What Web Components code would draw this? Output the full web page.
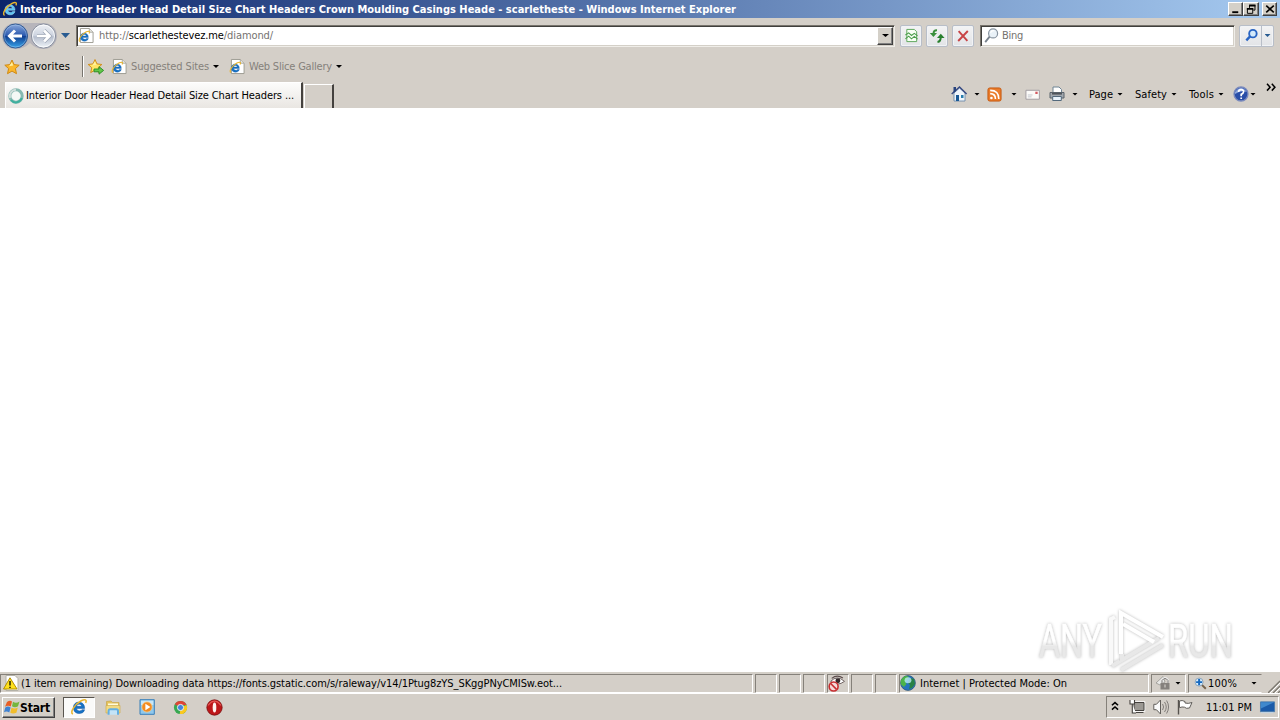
<!DOCTYPE html>
<html lang="en">
<head>
<meta charset="utf-8">
<title>Windows Internet Explorer</title>
<style>
  html, body { margin: 0; height: 100%; overflow: hidden; }
  body {
    font: 11px/14px "DejaVu Sans Condensed", "DejaVu Sans", sans-serif;
    font-stretch: condensed;
    color: #000;
    background: #d4cfc8;
  }
</style>
</head>
<body>
<desktop-screen></desktop-screen>
<script>
(function() {
  function define(name, html, setup) {
    const template = document.createElement("template");
    template.innerHTML = html;
    window.customElements.define(name, class extends HTMLElement {
      constructor() {
        super();
        this.attachShadow({ mode: "open" });
        this.shadowRoot.appendChild(template.content.cloneNode(true));
      }
      connectedCallback() {
        if (this.hasAttribute("x")) this.style.marginLeft = this.getAttribute("x") + "px";
        if (this.hasAttribute("w")) this.style.width = this.getAttribute("w") + "px";
        if (setup) setup(this, this.shadowRoot);
      }
    });
  }

  const eGlyph = `
    <path d="M13 9.3H5.8C6 11.6 9.8 12.2 10.6 10.4H13C12 15.3 3 15.2 3 8.6 3 1.8 13.3 2 13 9.3ZM5.9 7.4H10.3C10 4.9 6.3 4.9 5.9 7.4Z" fill="#1672c4" stroke="#0c4e9c" stroke-width=".4"/>
    <path d="M2.6 14.3C-.6 13 4.3 5.4 10 2.4 13.3.7 15.3 1.4 13.9 4.4" fill="none" stroke="#e9b52e" stroke-width="1.4"/>`;
  const star = (c) => `<path d="M8 1 10.1 5.6 15.2 6.2 11.4 9.6 12.5 14.7 8 12.1 3.5 14.7 4.6 9.6.8 6.2 5.9 5.6Z" fill="${c}" stroke="#d08a14" stroke-width="1"/><path d="M8 3 9.2 6.6 5 7.2Z" fill="#fff2a0"/>`;

  // every icon is drawn on a 16 x 16 grid
  const icons = {
    ie: eGlyph,
    ielight: eGlyph.replace("#1672c4", "#5cc5f5").replace("#0c4e9c", "#c3efff"),
    page: `<path d="M1.5.5H11L15 4.5V15.5H1.5Z" fill="#fff" stroke="#9b9a90"/><path d="M11 .5V4.5H15" fill="#e6e6df" stroke="#9b9a90" stroke-width=".8"/><g transform="translate(-1.2 2.2) scale(.86)">${eGlyph}</g>`,
    star: star("#fbb72c"),
    addstar: `<g transform="translate(-.6 -.4) scale(.95)">${star("#ffe566")}</g><path d="M6 10H11V7.6L15.6 11.4 11 15.2V12.8H6Z" fill="#63c74a" stroke="#268b25" stroke-width=".9"/>`,
    spinner: `<circle cx="8" cy="8" r="6.2" fill="#f5f8f6" stroke="#86b9b1" stroke-width="3"/><path d="M8 1.8A6.2 6.2 0 0 0 2 10" fill="none" stroke="#d1dddb" stroke-width="2"/><path d="M3 12A6.2 6.2 0 0 0 13.8 10" fill="none" stroke="#3fb09f" stroke-width="2"/>`,
    broken: `<path d="M3 1.5H11L13.5 4V14.5H3Z" fill="#f7fff4" stroke="#57a456"/><path d="M1.5 7.5 5 5.2 8 8 11 5.7 14.5 8.5M1.5 11.5 5 8.7 8 11.5 11 9 14.5 11.8" fill="none" stroke="#4b9d4b" stroke-width="1.1"/>`,
    refresh: `<path d="M8 2.2Q4.5 2 4.5 6" fill="none" stroke="#398f3c" stroke-width="2"/><path d="M.8 5H8L4.4 9Z" fill="#398f3c"/><path d="M8.5 14Q11.9 13.5 11.7 9" fill="none" stroke="#287f2e" stroke-width="2"/><path d="M8 10H15.6L11.8 5.8Z" fill="#287f2e"/>`,
    stop: `<path d="M3 2.5 13 13.5M13.5 2.3 2.5 13.7" stroke="#c84446" stroke-width="2.2"/>`,
    lens: `<circle cx="9.7" cy="5.8" r="4.8" fill="#eaf2f8" stroke="#8995a1" stroke-width="1.3"/><path d="M6 9.3 1.3 15" stroke="#77818c" stroke-width="2"/><path d="M7 5Q8 2.5 11 3" fill="none" stroke="#fff" stroke-width="1.3"/>`,
    bluelens: `<circle cx="9.5" cy="6" r="4" fill="#d4eafb" stroke="#2864c3" stroke-width="2"/><path d="M6.5 9 2.5 13.2" stroke="#2864c3" stroke-width="2.6"/>`,
    home: `<path d="M3 7V15H14V7L8.5 2Z" fill="#eff5fb" stroke="#6080a4" stroke-width=".8"/><path d="M.7 8 8.5 1 15.6 8" fill="none" stroke="#384b83" stroke-width="1.5"/><path d="M2.5 1H5V5L2.5 7Z" fill="#28447e"/><path d="M5 9H8V15H5Z" fill="#195894"/><path d="M10 9H12.5V12H10Z" fill="#287dad"/>`,
    rss: `<rect x="1" y="1" width="14" height="14" rx="2" fill="#ea7c2c" stroke="#c4550c"/><circle cx="4.7" cy="11.7" r="1.4" fill="#fff"/><path d="M3.4 7.1Q9 7.1 9 12.8M3.4 3.6Q12.7 3.6 12.6 12.8" fill="none" stroke="#fff" stroke-width="1.7"/>`,
    mail: `<path d="M1 3.5H15.3V13H1Z" fill="#fbfaf8" stroke="#a09ba0"/><path d="M3 8.5H8M3 10.5H7" stroke="#bfc3cc"/><path d="M11 5H13.5V7.5H11Z" fill="#d35961"/>`,
    printer: `<path d="M4 7V1H10L12.5 3.5V7" fill="#fff" stroke="#6f8494"/><path d="M1 6.5H15V12H1Z" fill="#a1a7ae" stroke="#59626a"/><path d="M3 7.8H13" stroke="#4b5056" stroke-width="1.5"/><path d="M3.7 10.5H12.3V14.5H3.7Z" fill="#e8f2fb" stroke="#53697c"/>`,
    help: `<circle cx="8" cy="8" r="7" fill="#294ea8" stroke="#7a8abd" stroke-width="1.3"/><path d="M2 6Q8-2 14 6 8 4 2 8Z" fill="#8ba5db"/><path d="M5.5 6Q5.7 3.7 8.1 3.7C12 3.7 10.9 7.3 8.2 8.4V10.2M8.2 11.5V13" fill="none" stroke="#fff" stroke-width="1.7"/>`,
    warning: `<path d="M3 .5H12L15 3.5V15.5H3Z" fill="#fff" stroke="#b4b2a8"/><path d="M7 2.8 14 14H.5Z" fill="#ffe11d" stroke="#b28e00" stroke-linejoin="round"/><path d="M7 6V10.5M7 11.7V13" stroke="#242100" stroke-width="1.5"/>`,
    blocked: `<path d="M2.5 6Q8.5-.5 15.5 6 9 11 2.5 6Z" fill="#fff" stroke="#6b5d5c" stroke-width=".9"/><circle cx="9.3" cy="5.4" r="2.3" fill="#33292b"/><path d="M3.5 3.2Q8.5-1 14 2.8" fill="none" stroke="#5b4c4c" stroke-width="1.1"/><circle cx="5.3" cy="10.8" r="4.2" fill="#f4dada" stroke="#c72e31" stroke-width="1.5"/><path d="M2.5 8 8 13.5" stroke="#c72e31" stroke-width="1.5"/>`,
    globe: `<circle cx="8" cy="8" r="7.4" fill="#2574bc" stroke="#2d506d" stroke-width=".7"/><path d="M3 2.5Q6-.2 9 2L7 5 5.5 7 6.5 9 4 12 1 9.5Q-.3 5 3 2.5Z" fill="#4bb349"/><path d="M10 3 14 4 15 9 12 13 9 14 10 10 8 8Z" fill="#278145"/><ellipse cx="8" cy="5.3" rx="3.4" ry="3" fill="#c1f0ff" opacity=".75"/>`,
    lock: `<path d="M1 8 8 1.5 10 7 5 10Z" fill="#e8e8e6" stroke="#96948f" stroke-width=".8"/><path d="M7 8V5Q10 1 13 5V8" fill="none" stroke="#eee" stroke-width="2"/><path d="M7 8V5.5Q10 1.5 13 5.5V8" fill="none" stroke="#77736f" stroke-width="1"/><path d="M5.5 8H14.5V14.5H5.5Z" fill="#85817d"/><path d="M10 9.5V12.5" stroke="#dedbd6"/>`,
    zoom: `<circle cx="6.3" cy="6.3" r="4.9" fill="#d8edfb" stroke="#7c98b2"/><path d="M6.3 2.6V10M2.6 6.3H10" stroke="#1769c0" stroke-width="2.4"/><path d="M10 10 14.5 14.5" stroke="#75624c" stroke-width="2.4"/>`,
    windows: `<path d="M3 3Q6 .7 8 2.5L6.8 7.5Q4 5.8 1 7.8Z" fill="#e85e25"/><path d="M9 2.8Q12 5 15.5 2.6L14 7.3Q11 9.2 8 7.3Z" fill="#75b63d"/><path d="M1.3 8.5Q4 6.6 6.6 8.5L5.3 13.5Q2.5 11.7 0 13.3Z" fill="#3f82d2"/><path d="M7.5 8.8Q11 10.5 13.8 8.5L12.4 13.8Q9 15.4 6.3 13.8Z" fill="#f1bd2c"/>`,
    folder: `<path d="M1.5 12V2.5L6 2 7.5 3.5H14V12Z" fill="#e5c35c" stroke="#c9a548" stroke-width=".7"/><path d="M3 4.5H13V8H3Z" fill="#fffbdc"/><path d="M1 6.5H15V14H1Z" fill="#f2da82" stroke="#d0ad4e" stroke-width=".7"/><path d="M3.6 15.8V11.8Q3.6 10.3 5 10.3H11.5Q13 10.3 13 11.8V15.8" fill="#c4e3f6" stroke="#64aee0" stroke-width="2"/>`,
    media: `<path d="M1 .7H15.3V15.3H1Z" fill="#8fc8ed" stroke="#397fb9"/><path d="M2 1.7H14.3V6H2Z" fill="#c8e6f7"/><circle cx="8" cy="8" r="5.1" fill="#f28b20" stroke="#ffca7b" stroke-width=".7"/><path d="M6.4 4.7 11.4 8 6.4 11.3Z" fill="#fff"/>`,
    chrome: `<circle cx="8" cy="8" r="7" fill="#38a852"/><path d="M8 8 1.9 4.6A7 7 0 0 1 14.4 5.2H8Z" fill="#df4436"/><path d="M8 8 14.4 5.2A7 7 0 0 1 7.2 15Z" fill="#fbc91e"/><circle cx="8" cy="8" r="3.3" fill="#4285de" stroke="#f3f4f0" stroke-width="1"/>`,
    opera: `<circle cx="8" cy="8" r="7.2" fill="#bd1719" stroke="#7c0c0d" stroke-width=".8"/><path d="M2 6Q8-2 14 6" fill="none" stroke="#e75552" stroke-width="1"/><ellipse cx="8" cy="8" rx="1.7" ry="4.8" fill="#fff3ee"/>`,
    network: `<path d="M5 3.5H15V11.5H5Z" fill="#9c9994" stroke="#fff" stroke-width="2.5"/><path d="M5 3.5H15V11.5H5Z" fill="#9c9994" stroke="#45423f"/><path d="M7 13.5H14.5" stroke="#45423f"/><path d="M1 1V5H5.5V1M3.3 5V14H7" fill="#fff" stroke="#45423f" stroke-width="1.1"/>`,
    volume: `<path d="M.8 5.3H3.4L7.5 1V15L3.4 10.7H.8Z" fill="#fafafa" stroke="#625f5b"/><path d="M9.6 5Q11.5 8 9.6 11M11.5 3Q15 8 11.5 13M13.6 1.5Q17.5 8 13.6 14.5" fill="none" stroke="#77736f" stroke-width=".9"/>`,
    flag: `<path d="M1.5 1V15.5" stroke="#56524e" stroke-width="1.4"/><path d="M2.5 2Q5 .8 8 2.5V4Q11 5 15 3.5L12.5 9Q9 10 7.5 8.2 5 7.5 2.5 8.7Z" fill="#fff" stroke="#625f5b"/>`,
    monitor: `<path d="M.5 2H15.5V12.5H.5Z" fill="#1b5ba9" stroke="#4d7dac"/><path d="M1 2.5H15L1 9Z" fill="#4089cd"/><path d="M1 13.5H14.5" stroke="#c3d6e8"/>`,
    min: `<path d="M3 11H11V13.5H3Z"/>`,
    restore: `<path d="M5.5 2H14V4.5H5.5ZM2.5 6.5H11V9H2.5Z"/><path d="M6 3V6.5M13.3 3V9.5H11M3.2 7V13.8H10.3V7" fill="none" stroke="#000" stroke-width="1.3"/>`,
    close: `<path d="M3 3.5 13 12.5M13 3.5 3 12.5" stroke="#000" stroke-width="2.2"/>`,
    chevrons: `<path d="M4.5 6 8 3 11.5 6M4.5 11 8 8 11.5 11" fill="none" stroke="#000" stroke-width="1.8"/>`,
    more: `<path d="M0 4 4.5 9 0 14M7 4 11.5 9 7 14" fill="none" stroke="#000" stroke-width="2.2"/>`
  };

  define("ui-icon", `
    <style>
      :host { display: block; flex: none; width: 16px; }
      svg { display: block; width: 100%; overflow: visible; }
    </style>
    <svg viewBox="0 0 16 16"></svg>`, (el, root) => {
    root.querySelector("svg").innerHTML = icons[el.getAttribute("name")];
  });

  // label that spreads its letters over a set width
  define("ui-label", `
    <style>
      :host { display: block; flex: none; padding-top: 1px; }
      span { display: block; width: max-content; white-space: nowrap; }
    </style>
    <span><slot></slot></span>`, (el, root) => {
    const span = root.querySelector("span");
    const length = el.textContent.length;
    const width = span.getBoundingClientRect().width;
    if (width) span.style.letterSpacing = (el.getAttribute("w") - width) / length + "px";
  });

  define("ui-arrow", `
    <style>
      :host { display: block; flex: none; width: 6px; margin-right: -1px; }
      i { display: block; height: 3px; background: currentColor; clip-path: polygon(0 0, 100% 0, 50% 100%); }
      :host(.down) i { height: 5px; }
    </style>
    <i></i>`);

  define("raised-button", `
    <style>
      :host {
        display: flex; flex: none; align-items: center; justify-content: center;
        box-sizing: border-box; height: 14px; background: #d4d0c8;
        border: 1px solid; border-color: #fff #404040 #404040 #fff;
        box-shadow: inset -1px -1px #808080;
      }
    </style>
    <slot></slot>`);

  define("tool-button", `
    <style>
      :host {
        display: flex; flex: none; align-items: center; justify-content: center;
        box-sizing: border-box; height: 22px; border: 1px solid #b8bec8; border-radius: 2px;
        background: linear-gradient(#f3f3f4, #e2e4e7); box-shadow: inset 0 0 0 1px #f1f3f6;
      }
    </style>
    <slot></slot>`);

  define("sunken-box", `
    <style>
      :host {
        display: flex; flex: none; align-items: center; box-sizing: border-box;
        height: 22px; background: #fff; border: 1px solid;
        border-color: #77736c #f0eee9 #f0eee9 #77736c;
        box-shadow: inset 1px 1px #403f3c, inset -1px -1px #d4d0c8;
      }
    </style>
    <slot></slot>`);

  define("title-bar", `
    <style>
      :host {
        display: flex; align-items: center; height: 18px; color: #fff; font-weight: bold;
        background: linear-gradient(90deg, #0a246a, #a6caf0);
      }
      .buttons { display: flex; margin-left: auto; padding-right: 3px; }
    </style>
    <ui-icon name="ielight" x="2"></ui-icon>
    <ui-label x="2" w="716">Interior Door Header Head Detail Size Chart Headers Crown Moulding Casings Heade - scarletheste - Windows Internet Explorer</ui-label>
    <div class="buttons">
      <raised-button w="15"><ui-icon name="min" w="12"></ui-icon></raised-button>
      <raised-button w="16"><ui-icon name="restore" w="12"></ui-icon></raised-button>
      <raised-button w="15" x="3"><ui-icon name="close" w="12"></ui-icon></raised-button>
    </div>`);

  define("history-buttons", `
    <style>
      :host { display: block; flex: none; width: 58px; height: 30px; }
    </style>
    <svg width="58" height="30" viewBox="0 0 58 30">
      <defs>
        <linearGradient id="b" x2="0" y2="1">
          <stop offset="0" stop-color="#8ba9dc"/><stop offset=".48" stop-color="#2b59ae"/>
          <stop offset=".52" stop-color="#113f91"/><stop offset="1" stop-color="#37a5eb"/>
        </linearGradient>
        <linearGradient id="f" x2="0" y2="1">
          <stop offset="0" stop-color="#eff1f5"/><stop offset=".5" stop-color="#cbd2df"/>
          <stop offset=".53" stop-color="#b5bdcd"/><stop offset="1" stop-color="#f1f6fa"/>
        </linearGradient>
      </defs>
      <path d="M15 2H44A13 13 0 0 1 44 28Q36 28 30 22 24 28 15 28A13 13 0 0 1 15 2Z" fill="#b7b5bb"/>
      <circle cx="15.5" cy="15" r="12" fill="url(#b)" stroke="#315992"/>
      <circle cx="43.5" cy="15" r="12" fill="url(#f)" stroke="#858c9b"/>
      <circle cx="15.5" cy="15" r="11" fill="none" stroke="#b7d8f5" stroke-opacity=".4"/>
      <circle cx="43.5" cy="15" r="11" fill="none" stroke="#fff" stroke-opacity=".8"/>
      <path d="M22 15H10M15 9.5 9.5 15 15 20.5" fill="none" stroke="#fff" stroke-width="3"/>
      <path d="M37 15H49M44 9.5 49.5 15 44 20.5" fill="none" stroke="#9aa3b3" stroke-width="4"/>
      <path d="M37 15H49M44 9.5 49.5 15 44 20.5" fill="none" stroke="#fff" stroke-width="2.7"/>
    </svg>`);

  define("address-row", `
    <style>
      :host { display: flex; align-items: center; height: 35px; color: #74726f; }
      b { font-weight: normal; color: #000; }
      .down { color: #285b91; }
      .button { height: 18px; color: #000; }
      .divider { height: 20px; width: 1px; margin-left: 2px; background: #b8bec8; }
    </style>
    <history-buttons></history-buttons>
    <ui-arrow class="down" x="3" w="9"></ui-arrow>
    <sunken-box x="7" w="819">
      <ui-icon name="page" x="2" w="15"></ui-icon>
      <ui-label x="5" w="174">http://<b>scarlethestevez.me</b>/diamond/</ui-label>
      <raised-button class="button" w="16" x="604"><ui-arrow w="7"></ui-arrow></raised-button>
    </sunken-box>
    <tool-button x="5" w="22"><ui-icon name="broken" w="15"></ui-icon></tool-button>
    <tool-button x="4" w="22"><ui-icon name="refresh" w="16"></ui-icon></tool-button>
    <tool-button x="4" w="22"><ui-icon name="stop" w="14"></ui-icon></tool-button>
    <sunken-box x="6" w="255">
      <ui-icon name="lens" x="3" w="15"></ui-icon>
      <ui-label x="3" w="21">Bing</ui-label>
    </sunken-box>
    <tool-button x="4" w="35">
      <ui-icon name="bluelens" w="15"></ui-icon>
      <div class="divider"></div>
      <ui-arrow x="3" style="color: #285b91"></ui-arrow>
    </tool-button>`);

  define("favorites-row", `
    <style>
      :host { display: flex; align-items: center; height: 27px; color: #85817b; }
      .main { color: #000; }
      .line { width: 1px; height: 21px; margin-left: 12px; background: #77746e; border-right: 1px solid #fff; }
      ui-arrow { color: #000; }
    </style>
    <ui-icon name="star" x="4"></ui-icon>
    <ui-label class="main" x="4" w="46">Favorites</ui-label>
    <div class="line"></div>
    <ui-icon name="addstar" x="4" w="16"></ui-icon>
    <ui-icon name="page" x="8" w="15"></ui-icon>
    <ui-label x="4" w="78">Suggested Sites</ui-label>
    <ui-arrow x="4"></ui-arrow>
    <ui-icon name="page" x="12" w="15"></ui-icon>
    <ui-label x="4" w="83">Web Slice Gallery</ui-label>
    <ui-arrow x="4"></ui-arrow>`);

  define("tab-row", `
    <style>
      :host { display: flex; height: 28px; align-items: flex-end; }
      .tab {
        display: flex; align-items: center; box-sizing: border-box; width: 298px; height: 26px;
        margin-left: 5px; border: 1px solid #fff; border-right: 2px solid #44413e;
        border-bottom: 0; background: linear-gradient(#fcfcfb, #e9e6e2);
      }
      .new {
        box-sizing: border-box; width: 30px; height: 24px; margin-left: 1px;
        border: 1px solid #fff; border-right: 2px solid #44413e; border-bottom: 0;
      }
      .commands { display: flex; align-items: center; height: 28px; margin-left: 617px; }
      .more { align-self: flex-start; margin-top: 1px; }
    </style>
    <div class="tab">
      <ui-icon name="spinner" x="2"></ui-icon>
      <ui-label x="2" w="268">Interior Door Header Head Detail Size Chart Headers ...</ui-label>
    </div>
    <div class="new"></div>
    <div class="commands">
      <ui-icon name="home"></ui-icon><ui-arrow x="7"></ui-arrow>
      <ui-icon name="rss" x="8" w="15"></ui-icon><ui-arrow x="9"></ui-arrow>
      <ui-icon name="mail" x="9" w="15"></ui-icon>
      <ui-icon name="printer" x="9"></ui-icon><ui-arrow x="7"></ui-arrow>
      <ui-label x="12" w="24">Page</ui-label><ui-arrow x="4"></ui-arrow>
      <ui-label x="13" w="32">Safety</ui-label><ui-arrow x="4"></ui-arrow>
      <ui-label x="13" w="25">Tools</ui-label><ui-arrow x="4"></ui-arrow>
      <ui-icon name="help" x="10" w="16"></ui-icon><ui-arrow x="1"></ui-arrow>
      <ui-icon class="more" name="more" x="12" w="11"></ui-icon>
    </div>`);

  define("status-panel", `
    <style>
      :host {
        display: flex; flex: none; align-items: center; box-sizing: border-box; height: 19px;
        border: 1px solid; border-color: #85817a #fff #fff #85817a;
      }
    </style>
    <slot></slot>`);

  define("status-bar", `
    <style>
      :host {
        display: flex; align-items: center; box-sizing: border-box; height: 22px; gap: 2px;
        border-top: 1px solid #d4d0c8; border-bottom: 1px solid #fff;
      }
      .last { border-right-color: transparent; }
      svg { margin-left: 4px; align-self: flex-end; }
    </style>
    <status-panel w="753">
      <ui-icon name="warning" x="2"></ui-icon>
      <ui-label x="2" w="541">(1 item remaining) Downloading data https://fonts.gstatic.com/s/raleway/v14/1Ptug8zYS_SKggPNyCMISw.eot...</ui-label>
    </status-panel>
    <status-panel w="22"></status-panel>
    <status-panel w="22"></status-panel>
    <status-panel w="22"></status-panel>
    <status-panel w="22"><ui-icon name="blocked" x="0" w="17"></ui-icon></status-panel>
    <status-panel w="22"></status-panel>
    <status-panel w="22"></status-panel>
    <status-panel w="250">
      <ui-icon name="globe"></ui-icon>
      <ui-label x="4" w="147">Internet | Protected Mode: On</ui-label>
    </status-panel>
    <status-panel w="35">
      <ui-icon name="lock" x="3"></ui-icon>
      <ui-arrow x="4"></ui-arrow>
    </status-panel>
    <status-panel class="last" w="74">
      <ui-icon name="zoom" x="5" w="13"></ui-icon>
      <ui-label x="1" w="29">100%</ui-label>
      <ui-arrow x="14"></ui-arrow>
    </status-panel>
    <svg width="12" height="13"><path d="M0 13 12 1M5 13 12 6M10 13 12 11" stroke="#7b776f" stroke-width="1.3"/><path d="M2 13 12 3M7 13 12 8" stroke="#fff"/></svg>`);

  define("task-bar", `
    <style>
      :host { display: flex; align-items: center; height: 26px; }
      .start { height: 21px; font-size: 12px; font-weight: bold; justify-content: flex-start; }
      .active {
        display: flex; align-items: center; justify-content: center; box-sizing: border-box;
        width: 32px; height: 21px; margin-left: 8px; background: #fafaf9;
        border: 1px solid; border-color: #59554f #fff #fff #59554f;
      }
      .tray {
        display: flex; align-items: center; box-sizing: border-box; width: 173px; height: 22px;
        margin: 0 1px 0 auto; border: 1px solid; border-color: #85817a #fff #fff #85817a;
      }
    </style>
    <raised-button class="start" x="2" w="53">
      <ui-icon name="windows" x="1"></ui-icon>
      <ui-label x="0" w="30">Start</ui-label>
    </raised-button>
    <div class="active"><ui-icon name="ie" w="18"></ui-icon></div>
    <ui-icon name="folder" x="10"></ui-icon>
    <ui-icon name="media" x="18"></ui-icon>
    <ui-icon name="chrome" x="18" w="15"></ui-icon>
    <ui-icon name="opera" x="18" w="17"></ui-icon>
    <div class="tray">
      <ui-icon name="chevrons" x="1" w="14"></ui-icon>
      <ui-icon name="network" x="7"></ui-icon>
      <ui-icon name="volume" x="8"></ui-icon>
      <ui-icon name="flag" x="8"></ui-icon>
      <ui-label x="13" w="46">11:01 PM</ui-label>
      <ui-icon name="monitor" x="8" w="15"></ui-icon>
    </div>`);

  define("run-watermark", `
    <style>
      :host { display: block; }
      svg { display: block; overflow: visible; filter: drop-shadow(0 0 1.5px rgba(0, 0, 0, .28)); }
      text { font: 400 46px/50px Roboto, sans-serif; }
    </style>
    <svg width="204" height="66" viewBox="0 0 204 66">
      <defs>
        <linearGradient id="g" x2="0" y2="1">
          <stop offset=".5" stop-color="#fff"/><stop offset=".6" stop-color="#e8e8e8"/>
        </linearGradient>
      </defs>
      <g fill="url(#g)" stroke="url(#g)" stroke-width=".6">
        <text x="3" y="49" textLength="63" lengthAdjust="spacingAndGlyphs">ANY</text>
        <text x="132" y="49" textLength="65" lengthAdjust="spacingAndGlyphs">RUN</text>
      </g>
      <path d="M75 57V11L79 9" fill="none" stroke="#f9f9f9" stroke-width="4"/>
      <path d="M86 46V52L123 30M76 58 84 53M85 62 127 37" fill="none" stroke="#e8e8e8" stroke-width="4"/>
      <path d="M85 46V5L127 29M87 16 118 34" fill="none" stroke="#fff" stroke-width="4"/>
    </svg>`);

  define("desktop-screen", `
    <style>
      :host { display: flex; flex-direction: column; width: 1280px; height: 720px; background: #d4cfc8; }
      main { position: relative; flex: 1; background: #fff; }
      run-watermark { position: absolute; right: 40px; bottom: -2px; }
    </style>
    <title-bar></title-bar>
    <address-row></address-row>
    <favorites-row></favorites-row>
    <tab-row></tab-row>
    <main><run-watermark></run-watermark></main>
    <status-bar></status-bar>
    <task-bar></task-bar>`);
})();
</script>
</body>
</html>
